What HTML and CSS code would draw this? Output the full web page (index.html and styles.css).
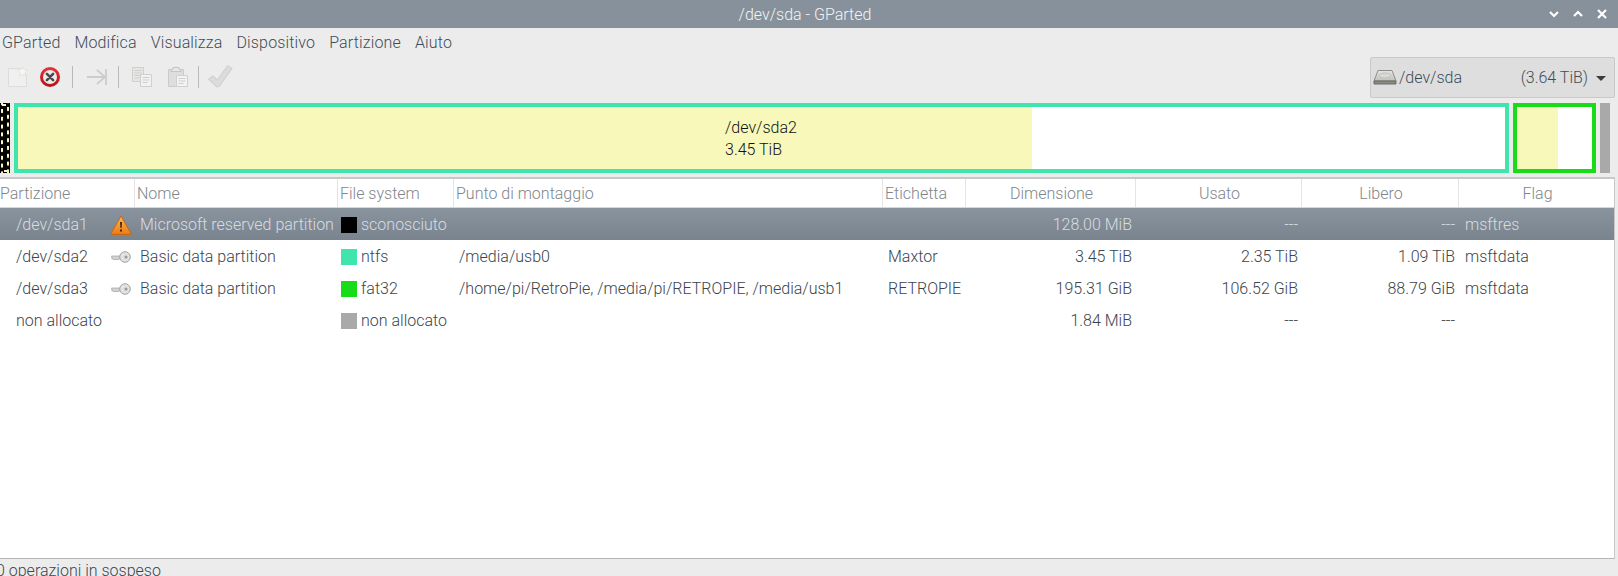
FILE: index.html
```html
<!DOCTYPE html>
<html lang="it">
<head>
<meta charset="utf-8">
<title>/dev/sda - GParted</title>
<link rel="stylesheet" href="styles.css">
</head>
<body>
<svg class="defs" width="0" height="0" aria-hidden="true">
  <defs>
    <linearGradient id="warn" x1="0" y1="0" x2="0" y2="1"><stop offset="0" stop-color="#fbb857"/><stop offset="1" stop-color="#ee7a14"/></linearGradient>
    <linearGradient id="red" x1="0" y1="0" x2="0" y2="1"><stop offset="0" stop-color="#e8323a"/><stop offset="1" stop-color="#b80f16"/></linearGradient>
    <linearGradient id="drive" x1="0" y1="0" x2="0" y2="1"><stop offset="0" stop-color="#e6e6e4"/><stop offset="1" stop-color="#c0c0bc"/></linearGradient>
    <symbol id="key" viewBox="0 0 20 12">
      <path d="M0.5 5h9.5v3h-2l-1 1-1-1-1 1-1-1-1 1-1-1H1z" fill="#d0d0ce" stroke="#a6a6a4" stroke-width=".7"/>
      <circle cx="14" cy="6" r="5.3" fill="#e2e2e0" stroke="#a2a2a0"/>
      <circle cx="15" cy="6" r="1.6" fill="#9a9a98"/>
    </symbol>
  </defs>
</svg>
<div class="window">
  <header class="titlebar">
    <span class="title">/dev/sda - GParted</span>
    <div class="winbtns">
      <svg class="winbtn" viewBox="0 0 12 12"><path d="M2 4l4 4 4-4" /></svg>
      <svg class="winbtn" viewBox="0 0 12 12"><path d="M2 8l4-4 4 4" /></svg>
      <svg class="winbtn" viewBox="0 0 12 12"><path d="M2 2l8 8M10 2l-8 8" /></svg>
    </div>
  </header>
  <nav class="menubar">
    <span>GParted</span><span>Modifica</span><span>Visualizza</span><span>Dispositivo</span><span>Partizione</span><span>Aiuto</span>
  </nav>
  <div class="toolbar">
    <svg class="tool tool-new" viewBox="0 0 22 22">
      <path d="M1.5 2.5h12l6 6v12h-18z" fill="#f0f0ee" stroke="#dcdcda"/>
      <path d="M15.5 0.5l1.6 3.2 3.4.5-2.5 2.4.6 3.4-3.1-1.6-3 1.6.6-3.4-2.500-2.4 3.4-.5z" fill="#f6f6f4" stroke="#dddddb" stroke-width=".7"/>
    </svg>
    <svg class="tool tool-stop" viewBox="0 0 22 22">
      <circle cx="11" cy="11" r="10" fill="url(#red)"/>
      <circle cx="11" cy="11" r="7" fill="#ececec"/>
      <path d="M7.9 7.9l6.200 6.200M14.100 7.900l-6.200 6.200" stroke="#4a4a4a" stroke-width="2.600" stroke-linecap="round"/>
    </svg>
    <i class="sep sep-a"></i>
    <svg class="tool tool-jump" viewBox="0 0 22 22">
      <path d="M1 11h17M11 4l8 7-8 7M20 3v16" fill="none" stroke="#cdcdcb" stroke-width="1.8"/>
    </svg>
    <i class="sep sep-b"></i>
    <svg class="tool tool-copy" viewBox="0 0 22 22">
      <path d="M1.500 1.500h11v14h-11z" fill="#e6e6e4" stroke="#cfcfcd"/>
      <path d="M3.500 4.500h7M3.500 7h7M3.500 9.500h7M3.500 12h5" stroke="#cfcfcd"/>
      <path d="M9.500 8.500h11v12h-11z" fill="#f2f2f0" stroke="#cfcfcd"/>
      <path d="M11.500 11.500h7M11.500 14h7M11.500 16.500h5" stroke="#cfcfcd"/>
    </svg>
    <svg class="tool tool-paste" viewBox="0 0 22 22">
      <path d="M1.500 3.500h15v17h-15z" fill="#dededc" stroke="#cbcbc9"/>
      <path d="M6 3.500V1.500h6v2h2v2H4v-2z" fill="#e8e8e6" stroke="#c4c4c2"/>
      <path d="M9.500 9.500h11v11h-11z" fill="#f3f3f1" stroke="#cfcfcd"/>
      <path d="M11.500 12.500h7M11.500 15h7M11.500 17.500h5" stroke="#cfcfcd"/>
    </svg>
    <i class="sep sep-c"></i>
    <svg class="tool tool-check" viewBox="0 0 24 24">
      <path d="M1.500 14l4-3 4 4L19 1.500l4 2.500-12 17h-2z" fill="#dcdcda" stroke="#cfcfcd"/>
    </svg>
    <div class="combo">
      <svg class="drive" viewBox="0 0 24 18">
        <path d="M5 2.500h14l4 10.500H1z" fill="url(#drive)" stroke="#8c8c88"/>
        <path d="M1 13h22v3H1z" fill="#8a8a82" stroke="#6a6a64"/>
        <ellipse cx="12" cy="7.500" rx="6" ry="2.500" fill="#d8d8d4" stroke="#b0b0ac" stroke-width=".6"/>
      </svg>
      <span class="combo-name">/dev/sda</span>
      <span class="combo-size">(3.64 TiB)</span>
      <i class="combo-arrow"></i>
    </div>
  </div>
  <section class="map">
    <svg class="map-unknown" viewBox="0 0 10 70" preserveAspectRatio="none">
      <defs>
        <pattern id="dashL" width="10" height="7.800" patternUnits="userSpaceOnUse" y="6">
          <rect x="1" y="0" width="2" height="4" fill="#f8f8ba"/>
        </pattern>
        <pattern id="dashR" width="10" height="7.800" patternUnits="userSpaceOnUse" y="4">
          <rect x="7" y="0" width="2" height="4" fill="#f8f8ba"/>
        </pattern>
      </defs>
      <rect width="10" height="70" fill="#000"/>
      <rect width="10" height="70" fill="url(#dashL)"/>
      <rect width="10" height="70" fill="url(#dashR)"/>
      <rect x="2" y="1" width="4" height="2" fill="#f8f8ba"/>
      <rect x="4" y="67" width="4" height="2" fill="#f8f8ba"/>
    </svg>
    <div class="part part-ntfs">
      <div class="used" style="width:68.2%"></div>
      <div class="part-label">/dev/sda2<br>3.45 TiB</div>
    </div>
    <div class="part part-fat">
      <div class="used" style="width:54%"></div>
    </div>
    <div class="map-free"></div>
  </section>
  <section class="tree">
    <div class="row head">
      <span class="c-part">Partizione</span>
      <span class="c-name">Nome</span>
      <span class="c-fs">File system</span>
      <span class="c-mount">Punto di montaggio</span>
      <span class="c-label">Etichetta</span>
      <span class="c-mid">Dimensione</span>
      <span class="c-mid">Usato</span>
      <span class="c-mid">Libero</span>
      <span class="c-mid c-last">Flag</span>
    </div>
    <div class="row item selected">
      <span class="c-part">/dev/sda1</span>
      <span class="c-name">
        <svg class="warn" viewBox="0 0 22 20">
          <path d="M11 1L21 18.500a.6.6 0 0 1-.5.9H1.500a.6.6 0 0 1-.5-.9z" fill="url(#warn)" stroke="#c9660f" stroke-linejoin="round"/>
          <path d="M10 7h2l-.4 6h-1.200zM10 14.500h2v2h-2z" fill="#3a2a14"/>
        </svg>
        <span>Microsoft reserved partition</span>
      </span>
      <span class="c-fs"><i class="swatch s-unknown"></i>sconosciuto</span>
      <span class="c-mount"></span>
      <span class="c-label"></span>
      <span class="c-num">128.00 MiB</span>
      <span class="c-num">---</span>
      <span class="c-num">---</span>
      <span class="c-flag">msftres</span>
    </div>
    <div class="row item">
      <span class="c-part">/dev/sda2</span>
      <span class="c-name"><svg class="key"><use href="#key"/></svg><span>Basic data partition</span></span>
      <span class="c-fs"><i class="swatch s-ntfs"></i>ntfs</span>
      <span class="c-mount">/media/usb0</span>
      <span class="c-label">Maxtor</span>
      <span class="c-num">3.45 TiB</span>
      <span class="c-num">2.35 TiB</span>
      <span class="c-num">1.09 TiB</span>
      <span class="c-flag">msftdata</span>
    </div>
    <div class="row item">
      <span class="c-part">/dev/sda3</span>
      <span class="c-name"><svg class="key"><use href="#key"/></svg><span>Basic data partition</span></span>
      <span class="c-fs"><i class="swatch s-fat"></i>fat32</span>
      <span class="c-mount">/home/pi/RetroPie, /media/pi/RETROPIE, /media/usb1</span>
      <span class="c-label">RETROPIE</span>
      <span class="c-num">195.31 GiB</span>
      <span class="c-num">106.52 GiB</span>
      <span class="c-num">88.79 GiB</span>
      <span class="c-flag">msftdata</span>
    </div>
    <div class="row item">
      <span class="c-part">non allocato</span>
      <span class="c-name"></span>
      <span class="c-fs"><i class="swatch s-free"></i>non allocato</span>
      <span class="c-mount"></span>
      <span class="c-label"></span>
      <span class="c-num">1.84 MiB</span>
      <span class="c-num">---</span>
      <span class="c-num">---</span>
      <span class="c-flag"></span>
    </div>
  </section>
  <footer class="status">0 operazioni in sospeso</footer>
</div>
</body>
</html>
```
FILE: styles.css
```css
* { box-sizing: border-box; }
html, body { margin: 0; height: 100%; overflow: hidden; }
body { font-family: Roboto, "Liberation Sans", sans-serif; font-size: 16px; font-weight: 300; color: #3c444c; background: #ececec; }
.defs { position: absolute; }
.window { height: 576px; display: flex; flex-direction: column; overflow: hidden; }

.titlebar { height: 28px; flex: none; background: #87919b; color: #f2f4f5; display: flex; align-items: center; justify-content: center; padding-right: 8px; position: relative; }
.winbtns { position: absolute; right: 10px; top: 8px; display: flex; gap: 12px; }
.winbtn { width: 12px; height: 12px; fill: none; stroke: #fff; stroke-width: 2.2; }

.menubar { height: 28px; flex: none; display: flex; align-items: center; padding: 1px 0 0 2px; gap: 14px; letter-spacing: .15px; color: #3e4c58; }

.toolbar { height: 42px; flex: none; display: flex; align-items: center; padding-left: 7px; }
.tool { flex: none; display: block; }
.tool-new { width: 22px; height: 22px; }
.tool-stop { width: 22px; height: 22px; margin-left: 10px; }
.sep { flex: none; width: 1px; height: 22px; background: #b9b9b9; }
.sep-a { margin-left: 11px; }
.tool-jump { width: 22px; height: 22px; margin-left: 13px; }
.sep-b { margin-left: 10px; }
.tool-copy { width: 22px; height: 22px; margin-left: 12px; }
.tool-paste { width: 22px; height: 22px; margin-left: 14px; }
.sep-c { margin-left: 9px; }
.tool-check { width: 26px; height: 26px; margin-left: 8px; }
.combo { margin-left: auto; margin-right: 3px; width: 245px; height: 41px; background: #dedede; border: 1px solid #c9c9c9; border-radius: 2px; display: flex; align-items: center; padding-left: 2px; color: #3e4c58; }
.drive { width: 24px; height: 18px; flex: none; }
.combo-name { margin-left: 2px; }
.combo-size { margin-left: auto; }
.combo-arrow { width: 0; height: 0; border-left: 5px solid transparent; border-right: 5px solid transparent; border-top: 5px solid #3c3c3c; margin: 2px 8px 0 8px; }

.map { height: 70px; flex: none; margin-top: 5px; display: flex; gap: 4px; }
.map-unknown { width: 10px; height: 70px; flex: none; display: block; }
.part { height: 70px; border: 4px solid; background: #fff; position: relative; flex: none; }
.part-ntfs { width: 1495px; border-color: #40e5ad; }
.part-fat { width: 83px; border-color: #19dc19; }
.used { height: 100%; background: #f8f8ba; }
.part-label { position: absolute; top: 10px; left: 707px; line-height: 22px; color: #111; }
.map-free { width: 10px; height: 70px; background: #a9a9a9; flex: none; }

.tree { margin-top: 4px; flex: 1; width: 1615px; background: #fff; border-top: 2px solid #c8c8c8; border-right: 1px solid #c8c8c8; border-bottom: 1px solid #b4b4b4; overflow: hidden; }
.row { display: grid; grid-template-columns: 135px 203px 116px 429px 83px 170px 166px 157px 155px; white-space: nowrap; }
.head { height: 29px; align-items: center; color: #80868c; border-bottom: 1px solid #d6d6d6; }
.head span { height: 100%; display: flex; align-items: center; border-right: 1px solid #e4e4e4; padding-left: 2px; padding-top: 1px; }
.head .c-part { padding-left: 0; }
.head .c-mid { justify-content: center; padding-left: 2px; }
.head .c-last { border-right: 0; }
.item { height: 32px; align-items: center; padding-top: 1px; }
.selected { background: linear-gradient(#8a949e, #7a848e); color: #d8dde1; }
.item .c-part { padding-left: 16px; }
.item .c-name { display: flex; align-items: center; overflow: visible; padding-left: 5px; }
.item .c-fs { display: flex; align-items: center; padding-left: 3px; }
.item .c-mount { padding-left: 5px; overflow: visible; }
.item .c-label { padding-left: 5px; }
.item .c-num { text-align: right; padding-right: 4px; }
.item .c-flag { padding-left: 6px; }
.warn { width: 22px; height: 20px; margin: 0 8px 0 -30px; flex: none; }
.key { width: 20px; height: 12px; margin: 0 9px 0 -29px; flex: none; }
.swatch { width: 16px; height: 16px; margin-right: 4px; flex: none; display: block; }
.s-unknown { background: #000; }
.s-ntfs { background: #40e5ad; }
.s-fat { background: #19dc19; }
.s-free { background: #a9a9a9; }

.status { height: 17px; flex: none; padding: 3px 0 0 0; text-indent: -4px; line-height: 18px; white-space: nowrap; overflow: hidden; }
```
